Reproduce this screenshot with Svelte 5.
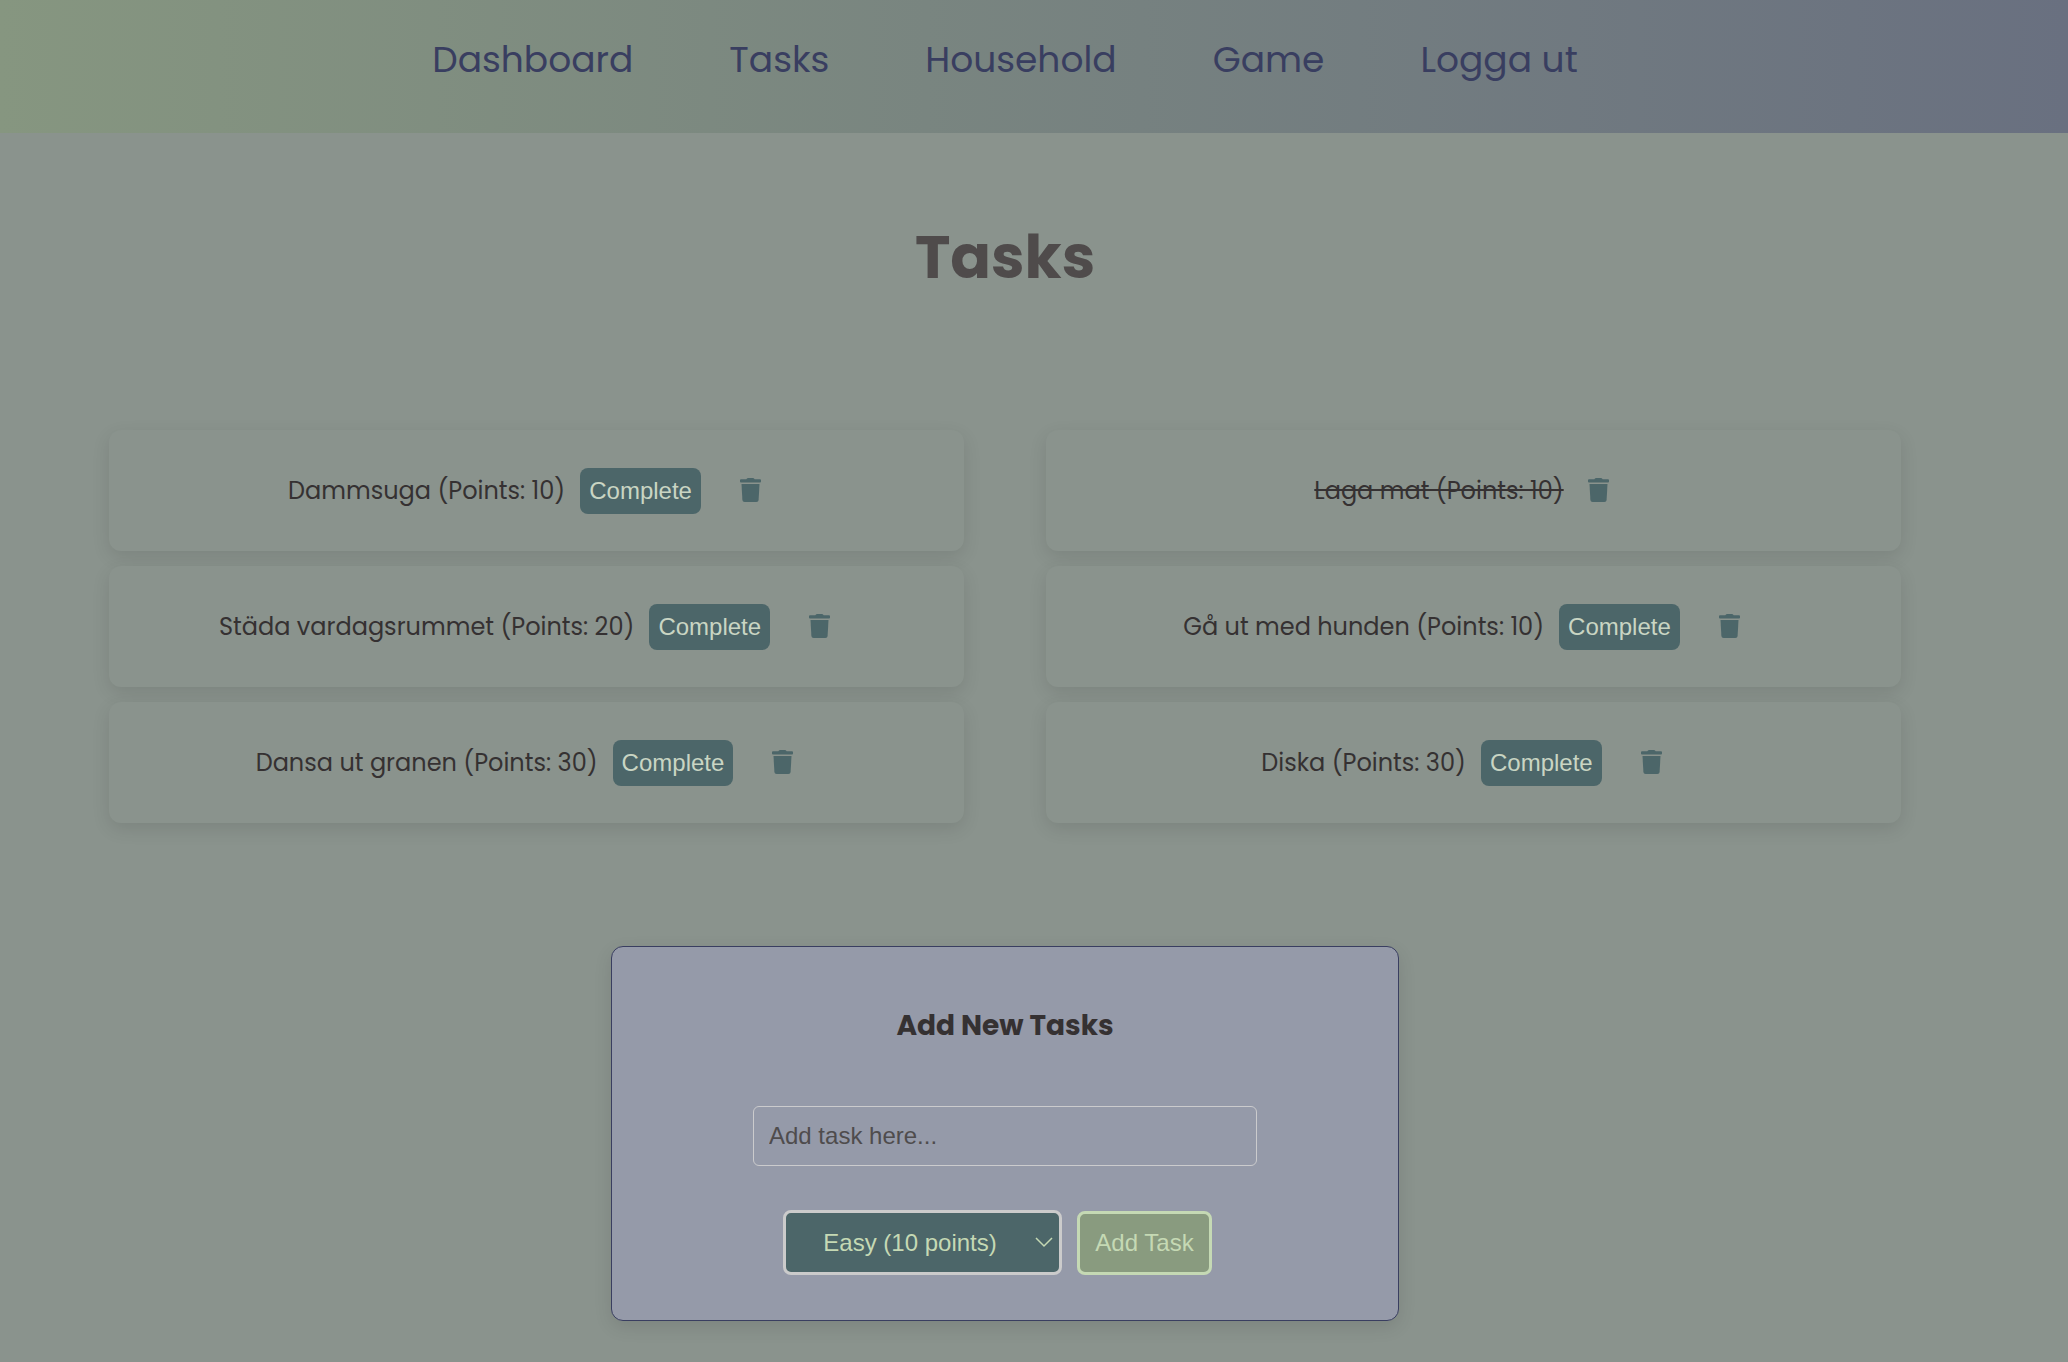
<script>
  const links = ['Dashboard', 'Tasks', 'Household', 'Game', 'Logga ut'];

  let tasks = $state([
    { name: 'Dammsuga', points: 10, done: false },
    { name: 'Laga mat', points: 10, done: true },
    { name: 'Städa vardagsrummet', points: 20, done: false },
    { name: 'Gå ut med hunden', points: 10, done: false },
    { name: 'Dansa ut granen', points: 30, done: false },
    { name: 'Diska', points: 30, done: false }
  ]);

  let name = $state('');
  let points = $state('10');

  function addTask(event) {
    event.preventDefault();
    if (!name.trim()) return;
    tasks.push({ name: name.trim(), points: Number(points), done: false });
    name = '';
  }

  function removeTask(task) {
    tasks = tasks.filter((t) => t !== task);
  }
</script>

<header>
  <nav>
    {#each links as link}
      <a href="#{link.toLowerCase().replace(' ', '-')}">{link}</a>
    {/each}
  </nav>
</header>

<main>
  <h1>Tasks</h1>

  <ul>
    {#each tasks as task}
      <li>
        <span class:done={task.done}>{task.name} (Points: {task.points})</span>
        {#if !task.done}
          <button class="complete" type="button" onclick={() => (task.done = true)}>Complete</button>
        {/if}
        <button class="trash" type="button" aria-label="Delete {task.name}" onclick={() => removeTask(task)}>
          <svg viewBox="0 0 21 24" aria-hidden="true">
            <path d="M1 1.300h5.300L7 .4Q7.300 0 7.800 0h5.400q.5 0 .8.4l.7.900H20q1 0 1 1v1.300q0 .9-.9.9H.9Q0 4.500 0 3.600V2.300q0-1 1-1Z" />
            <path d="M1.500 6h18l-.9 15.900Q18.400 24 16.400 24H4.600q-2 0-2.200-2.100Z" />
          </svg>
        </button>
      </li>
    {/each}
  </ul>

  <form onsubmit={addTask}>
    <h2>Add New Tasks</h2>
    <input type="text" aria-label="Task" placeholder="Add task here..." bind:value={name} />
    <div class="row">
      <div class="picker">
        <select aria-label="Difficulty" bind:value={points}>
          <option value="10">Easy (10 points)</option>
          <option value="20">Medium (20 points)</option>
          <option value="30">Hard (30 points)</option>
        </select>
        <svg viewBox="0 0 18 11" aria-hidden="true"><path d="M1 1l8 8 8-8" /></svg>
      </div>
      <button class="add" type="submit">Add Task</button>
    </div>
  </form>
</main>

<style>
  :global(body) {
    background: #8a938d;
    color: #353132;
    font-family: Poppins, Inter, sans-serif;
  }

  header {
    padding: 32px 58px 45px 0;
    background: linear-gradient(to right, #869680, #697080);
  }

  nav {
    display: flex;
    justify-content: center;
    gap: 96px;
  }

  nav a {
    color: #393e60;
    font-size: 36px;
    line-height: 56px;
    text-decoration: none;
  }

  main {
    display: flex;
    flex-direction: column;
    align-items: center;
    padding: 79px 167px 42px 109px;
  }

  h1 {
    margin: 0;
    color: #4f4b4b;
    font-size: 60px;
    line-height: 90px;
    font-weight: 700;
  }

  ul {
    display: grid;
    grid-template-columns: 1fr 1fr;
    gap: 15px 82px;
    width: 100%;
    margin: 128px 0 0;
    padding: 0;
    list-style: none;
  }

  li {
    display: flex;
    align-items: center;
    justify-content: center;
    min-height: 121px;
    border-radius: 12px;
    box-shadow: 0 6px 18px rgba(0, 0, 0, 0.1);
    background: #8a938d;
    font-size: 24px;
  }

  .done {
    text-decoration: line-through;
  }

  button,
  input,
  select {
    box-sizing: border-box;
    font-family: Arial, "Liberation Sans", sans-serif;
    font-size: 24px;
  }

  .complete {
    height: 46px;
    margin: 0 15px;
    padding: 0 9px;
    border: 0;
    border-radius: 8px;
    background: #4c6669;
    color: #c9d5c3;
  }

  .trash {
    display: flex;
    padding: 12px 24px 14px;
    border: 0;
    background: none;
  }

  .trash svg {
    width: 21px;
    height: 24px;
    fill: #4c6669;
  }

  form {
    display: flex;
    flex-direction: column;
    align-items: center;
    box-sizing: border-box;
    width: 788px;
    max-width: 100%;
    margin-top: 123px;
    padding: 57px 20px 45px;
    border: 1px solid #393e60;
    border-radius: 12px;
    box-shadow: 0 6px 18px rgba(0, 0, 0, 0.1);
    background: #959aa9;
  }

  h2 {
    margin: 0;
    font-size: 28px;
    line-height: 44px;
    font-weight: 700;
  }

  input {
    width: 504px;
    max-width: 100%;
    height: 60px;
    margin: 58px 0 44px;
    padding: 0 15px;
    border: 1px solid #cbcbcd;
    border-radius: 6px;
    background: transparent;
    color: #353132;
  }

  input::placeholder {
    color: #4f4c4d;
  }

  .row {
    display: flex;
    align-items: flex-end;
    gap: 15px;
    margin-right: 15px;
  }

  .picker {
    position: relative;
  }

  select {
    display: block;
    width: 279px;
    height: 65px;
    padding: 0 60px 0 37px;
    border: 3px solid #cbcbcb;
    border-radius: 8px;
    appearance: none;
    background: #4c6669;
    color: #c5d9b4;
  }

  .picker svg {
    position: absolute;
    top: 27px;
    right: 9px;
    width: 18px;
    height: 11px;
    fill: none;
    stroke: #c5d9b4;
    stroke-width: 1.5;
    pointer-events: none;
  }

  .add {
    height: 64px;
    padding: 0 15px;
    border: 3px solid #c5d9b4;
    border-radius: 8px;
    background: #899b7f;
    color: #c5d9b4;
  }
</style>
